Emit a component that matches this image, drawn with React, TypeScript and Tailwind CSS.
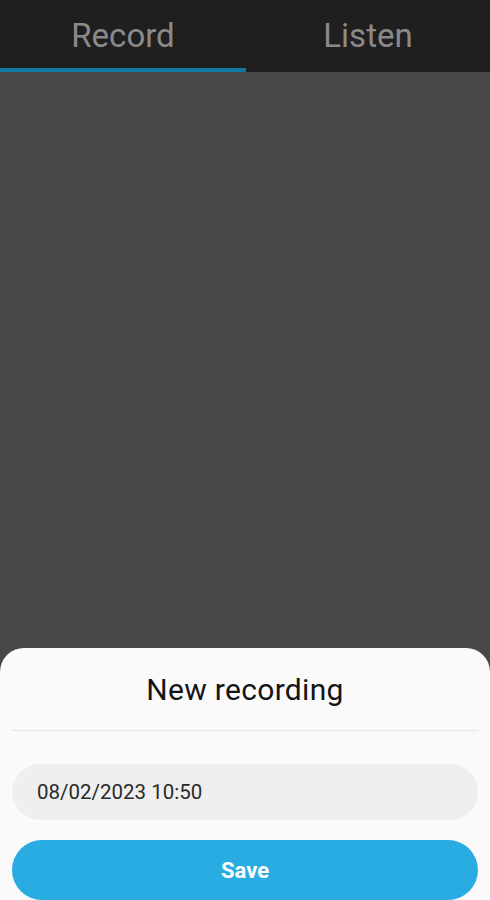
export default function App() {
  return (
    <div className="h-[900px] w-full overflow-hidden flex flex-col bg-[#474747] font-['Roboto',sans-serif]">
      <div className="h-[72px] bg-[#1f1f1f] flex">
        <div className="w-[246px] flex flex-col">
          <div className="flex-1 flex items-center justify-center pt-[3px] text-[33px] text-[#8a8a8a]">Record</div>
          <div className="h-[4px] bg-[#127aa0]" />
        </div>
        <div className="flex-1 flex items-center justify-center pt-[3px] pb-[4px] text-[33px] text-[#8a8a8a]">Listen</div>
      </div>

      <div className="flex-1" />

      <div className="h-[252px] bg-[#fafafa] rounded-t-[24px] px-[12px] flex flex-col">
        <div className="h-[83px] flex items-center justify-center pt-[1px] text-[30px] tracking-[0.3px] text-[#141414]">New recording</div>
        <div className="h-px bg-[#e6e6e6]" />
        <div className="mt-[33px] h-[56px] rounded-full bg-[#efefef] flex items-center px-[25px] text-[20.5px] text-[#2a2a2a]">
          08/02/2023 10:50
        </div>
        <button className="mt-[20px] h-[60px] shrink-0 rounded-full bg-[#29ace2] text-white text-[22px] font-bold flex items-center justify-center">
          Save
        </button>
      </div>
    </div>
  );
}
